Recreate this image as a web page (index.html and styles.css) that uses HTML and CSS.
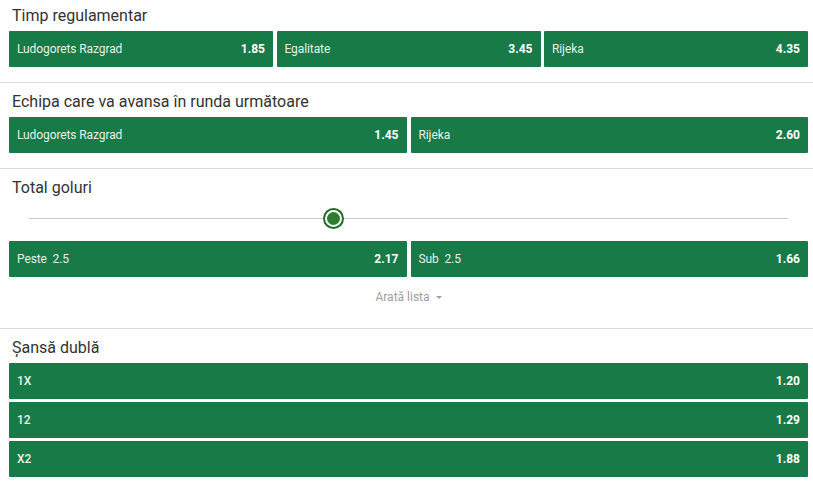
FILE: index.html
```html
<!DOCTYPE html>
<html lang="ro">
<head>
<meta charset="utf-8">
<link rel="stylesheet" href="styles.css">
</head>
<body>
<section class="market first">
  <div class="title">Timp regulamentar</div>
  <div class="row cols3">
    <div class="btn"><span class="lbl">Ludogorets Razgrad</span><span class="odd">1.85</span></div>
    <div class="btn"><span class="lbl">Egalitate</span><span class="odd">3.45</span></div>
    <div class="btn"><span class="lbl">Rijeka</span><span class="odd">4.35</span></div>
  </div>
</section>
<section class="market">
  <div class="title">Echipa care va avansa în runda următoare</div>
  <div class="row cols2">
    <div class="btn"><span class="lbl">Ludogorets Razgrad</span><span class="odd">1.45</span></div>
    <div class="btn"><span class="lbl">Rijeka</span><span class="odd">2.60</span></div>
  </div>
</section>
<section class="market">
  <div class="title">Total goluri</div>
  <div class="slider">
    <div class="track"><div class="thumb"></div></div>
  </div>
  <div class="row cols2">
    <div class="btn"><span class="lbl">Peste&nbsp; 2.5</span><span class="odd">2.17</span></div>
    <div class="btn"><span class="lbl">Sub&nbsp; 2.5</span><span class="odd">1.66</span></div>
  </div>
  <div class="more">Arată lista <span class="caret"></span></div>
</section>
<section class="market last">
  <div class="title">Șansă dublă</div>
  <div class="list">
    <div class="btn"><span class="lbl strong">1X</span><span class="odd">1.20</span></div>
    <div class="btn"><span class="lbl strong">12</span><span class="odd">1.29</span></div>
    <div class="btn"><span class="lbl strong">X2</span><span class="odd">1.88</span></div>
  </div>
</section>
</body>
</html>
```
FILE: styles.css
```css
html, body {
  margin: 0;
  padding: 0;
  background: #fff;
  font-family: Roboto, "Liberation Sans", Arial, sans-serif;
}
.market {
  padding: 8px 5px 15px 9px;
  border-bottom: 1px solid #dcdcdc;
}
.market.first {
  padding-top: 5px;
}
.market.last {
  border-bottom: none;
}
.title {
  font-size: 16px;
  line-height: 22px;
  color: #333;
  padding-left: 3px;
  margin-bottom: 4px;
}
.row {
  display: grid;
  gap: 4px;
}
.cols3 {
  grid-template-columns: 1fr 1fr 1fr;
  gap: 3.5px;
}
.cols2 {
  grid-template-columns: 1fr 1fr;
}
.list {
  display: flex;
  flex-direction: column;
  gap: 3px;
}
.btn {
  height: 36px;
  background: #187a47;
  border-radius: 1px;
  display: flex;
  align-items: center;
  justify-content: space-between;
  padding: 0 8px;
  font-size: 12px;
  color: #e4f1e8;
}
.lbl {
  letter-spacing: -0.1px;
}
.lbl.strong {
  font-weight: 500;
  color: #e8f3ec;
}
.odd {
  font-weight: 700;
  color: #fff;
}
.slider {
  height: 34px;
  box-sizing: border-box;
  display: flex;
  align-items: flex-start;
  padding: 15px 20px 0;
  margin-bottom: 4px;
}
.track {
  position: relative;
  flex: 1;
  height: 1px;
  background: #c8c8c8;
}
.thumb {
  position: absolute;
  left: 40%;
  top: -8px;
  width: 13px;
  height: 13px;
  margin-left: -8px;
  border-radius: 50%;
  background: #2e7d2e;
  border: 2px solid #fff;
  box-shadow: 0 0 0 2px #1f6b2a;
}
.more {
  margin-top: 12px;
  margin-bottom: 8px;
  text-align: center;
  font-size: 12px;
  line-height: 16px;
  color: #a0a0a0;
}
.caret {
  display: inline-block;
  width: 0;
  height: 0;
  border-left: 3px solid transparent;
  border-right: 3px solid transparent;
  border-top: 3px solid #a0a0a0;
  vertical-align: middle;
  margin-left: 3px;
}
```
